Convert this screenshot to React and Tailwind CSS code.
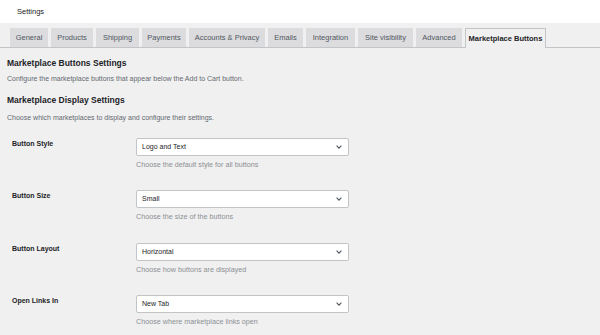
import React from 'react';

const tabs = [
  { label: 'General', w: 'w-[38px]' },
  { label: 'Products', w: 'w-[42px]' },
  { label: 'Shipping', w: 'w-[43px]' },
  { label: 'Payments', w: 'w-[44px]' },
  { label: 'Accounts & Privacy', w: 'w-[76px]' },
  { label: 'Emails', w: 'w-[35px]' },
  { label: 'Integration', w: 'w-[49px]' },
  { label: 'Site visibility', w: 'w-[55px]' },
  { label: 'Advanced', w: 'w-[46px]' },
  { label: 'Marketplace Buttons', w: 'w-[81px]', active: true },
];

const rows = [
  { label: 'Button Style', value: 'Logo and Text', help: 'Choose the default style for all buttons' },
  { label: 'Button Size', value: 'Small', help: 'Choose the size of the buttons' },
  { label: 'Button Layout', value: 'Horizontal', help: 'Choose how buttons are displayed' },
  { label: 'Open Links In', value: 'New Tab', help: 'Choose where marketplace links open' },
];

const Chevron = () => (
  <svg width="6" height="4" viewBox="0 0 6 4" className="shrink-0">
    <path d="M0.6 0.7 L3 3.1 L5.4 0.7" fill="none" stroke="#50575e" strokeWidth="1.1" />
  </svg>
);

const App = () => {
  return (
    <div className="w-[600px] h-[335px] overflow-hidden bg-[#f0f0f0] text-[#1d2327] font-['Liberation_Sans',Arial,sans-serif]">

      {/* top bar */}
      <div className="h-[23px] bg-white flex items-center pl-[17px] text-[7.5px]">
        Settings
      </div>

      {/* tabs */}
      <div className="pt-[5px] pl-[10px] flex gap-[3px] border-b border-[#c3c4c7]">
        {tabs.map(t => (
          <div
            key={t.label}
            className={`${t.w} h-[19px] flex items-center justify-center text-[7.5px] whitespace-nowrap border border-b-0 -mb-px
              ${t.active
                ? 'bg-[#f0f0f0] border-[#c3c4c7] font-bold text-[#1d2327] h-[20px]'
                : 'bg-[#dcdcde] border-[#dcdcde] text-[#50575e]'}`}>
            {t.label}
          </div>
        ))}
      </div>

      {/* content */}
      <div className="px-[7px]">
        <h2 className="mt-[9px] text-[8.5px] leading-[12px] font-bold">Marketplace Buttons Settings</h2>
        <p className="mt-[5px] text-[7px] leading-[10px] text-[#646970]">
          Configure the marketplace buttons that appear below the Add to Cart button.
        </p>
        <h2 className="mt-[10px] text-[8.5px] leading-[12px] font-bold">Marketplace Display Settings</h2>
        <p className="mt-[7px] text-[7px] leading-[10px] text-[#646970]">
          Choose which marketplaces to display and configure their settings.
        </p>

        <div className="mt-[15px] pl-[5px]">
          {rows.map(r => (
            <div key={r.label} className="flex h-[52.4px]">
              <div className="w-[124px] text-[7px] leading-[12px] font-bold">{r.label}</div>
              <div>
                <div className="w-[213px] h-[18px] bg-white border border-[#c3c4c7] rounded-[2px] flex items-center justify-between pl-[5px] pr-[6px] text-[7px]">
                  <span>{r.value}</span>
                  <Chevron />
                </div>
                <p className="mt-[4px] text-[7.2px] leading-[10px] text-[#8c8f94]">{r.help}</p>
              </div>
            </div>
          ))}
        </div>
      </div>
    </div>
  );
};

export default App;
